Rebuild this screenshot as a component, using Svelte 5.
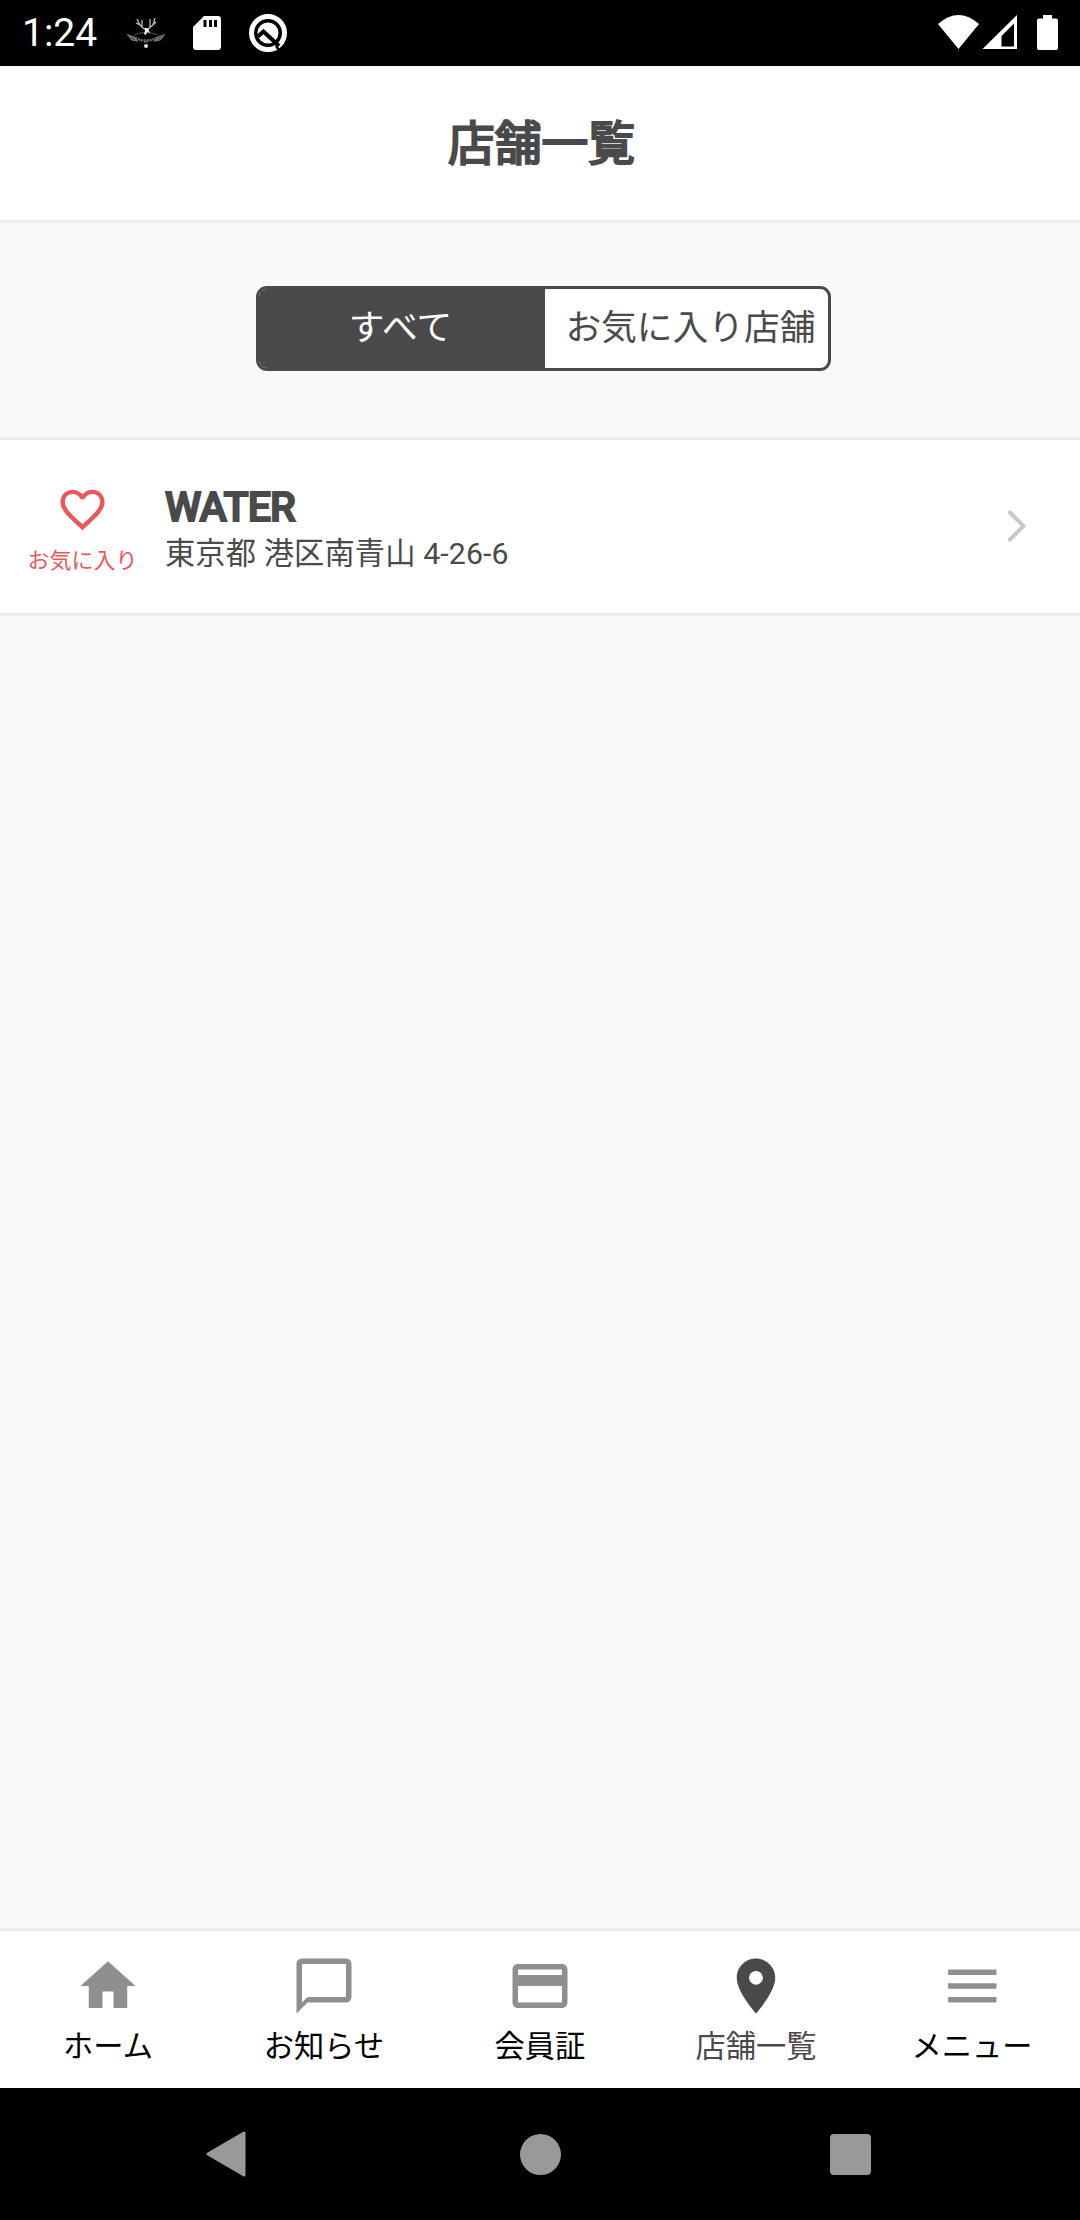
<script>
	let activeTab = $state('all');
	let activeNav = $state('shops');

	const tabs = [
		{ id: 'all', label: 'すべて' },
		{ id: 'favorite', label: 'お気に入り店舗' }
	];

	const shops = [{ name: 'WATER', address: '東京都 港区南青山 4-26-6' }];

	const navItems = [
		{ id: 'home', label: 'ホーム', path: 'M10 20v-6h4v6h5v-8h3L12 3 2 12h3v8z' },
		{
			id: 'news',
			label: 'お知らせ',
			path: 'M20 2H4c-1.100 0-2 .9-2 2v18l4-4h14c1.100 0 2-.9 2-2V4c0-1.100-.9-2-2-2zm0 14H6l-2 2V4h16v12z'
		},
		{
			id: 'card',
			label: '会員証',
			path: 'M20 4H4c-1.110 0-1.990.890-1.990 2L2 18c0 1.110.890 2 2 2h16c1.110 0 2-.890 2-2V6c0-1.110-.890-2-2-2zm0 14H4v-6h16v6zm0-10H4V6h16v2z'
		},
		{
			id: 'shops',
			label: '店舗一覧',
			path: 'M12 2C8.130 2 5 5.130 5 9c0 5.250 7 13 7 13s7-7.750 7-13c0-3.870-3.130-7-7-7zm0 9.500c-1.380 0-2.500-1.120-2.500-2.500s1.120-2.500 2.500-2.500 2.500 1.120 2.500 2.500-1.120 2.500-2.500 2.500z'
		},
		{ id: 'menu', label: 'メニュー', path: 'M3.300 18h17.600v-2H3.300v2zm0-5h17.600v-2H3.300v2zm0-7v2h17.600V6H3.300z' }
	];
</script>

<div class="screen">
	<div class="status-bar">
		<span class="time">1:24</span>
		<svg class="deer" viewBox="0 0 38 34" width="38" height="34">
			<g fill="none" stroke="#bbb" stroke-width="1.300">
				<path d="M17 13 13 9 10 3M13 9 9 7M15 11V4M21 13l5-4 2-7M26 9l3-3M23 11V3" />
				<path d="M7 19q12-5 24 0" stroke="#444" />
				<path d="M8 22q11 5 22 0" stroke="#777" stroke-width="2.500" stroke-dasharray="2 1" />
				<path d="m1 19 6 2 3 4-5-1zM37 19l-6 2-3 4 5-1z" fill="#555" stroke="#777" />
			</g>
			<path d="m17 12 4 0 2 5-3-1-1 3-2-1 1-3z" fill="#eee" />
			<circle cx="19" cy="30" r="2" fill="#ddd" />
			<path d="M17 26h4" stroke="#777" />
		</svg>
		<svg class="sd" viewBox="0 0 28 34" width="28" height="34">
			<path
				d="M11 0H25q3 0 3 3V31q0 3-3 3H3q-3 0-3-3V11zM10.500 4v7h3V4zm5.500 0v7h3V4zm5 0v7h3V4z"
				fill="#fff"
				fill-rule="evenodd"
			/>
		</svg>
		<svg class="q" viewBox="0 0 38 38" width="38" height="38">
			<circle cx="19" cy="19" r="16.500" fill="none" stroke="#fff" stroke-width="5" />
			<circle cx="19" cy="19" r="10.500" fill="#fff" />
			<path d="m9 22.500 5.500-5L30 32" fill="none" stroke="#000" stroke-width="4" />
			<path d="m27 32 3 4" stroke="#000" stroke-width="2.500" />
		</svg>
		<svg class="signals" viewBox="0 0 121 38" width="121" height="38">
			<path d="M0 10Q20.500-8 41 10L20.500 35z" fill="#fff" />
			<path d="M79 1v34H44.500zM76 9.500 63.500 22v10.500H76z" fill="#fff" fill-rule="evenodd" />
			<path
				d="M105 1h9v3.500h4q2 0 2 2V34q0 2-2 2h-17q-2 0-2-2V6.500q0-2 2-2h4z"
				fill="#fff"
			/>
		</svg>
	</div>

	<header>
		<h1>店舗一覧</h1>
	</header>

	<div class="filter">
		<div class="segment">
			{#each tabs as tab}
				<button class:active={activeTab === tab.id} onclick={() => (activeTab = tab.id)}>{tab.label}</button>
			{/each}
		</div>
	</div>

	<main>
		{#each shops as shop}
			<div class="shop">
				<div class="favorite">
					<svg viewBox="0 0 24 24" width="53" height="53">
						<path
							fill="#e9585a"
							d="M16.500 3c-1.740 0-3.410.810-4.500 2.090C10.910 3.810 9.240 3 7.500 3 4.420 3 2 5.420 2 8.500c0 3.780 3.400 6.860 8.550 11.540L12 21.350l1.450-1.320C18.600 15.360 22 12.280 22 8.500 22 5.420 19.580 3 16.500 3zm-4.400 15.550l-.1.100-.1-.1C7.140 14.240 4 11.390 4 8.500 4 6.500 5.500 5 7.500 5c1.540 0 3.040.990 3.570 2.360h1.870C13.460 5.990 14.960 5 16.500 5c2 0 3.500 1.500 3.500 3.500 0 2.890-3.140 5.740-7.900 10.050z"
						/>
					</svg>
					<span>お気に入り</span>
				</div>
				<div class="info">
					<h2>{shop.name}</h2>
					<p>{shop.address}</p>
				</div>
				<svg class="chevron" viewBox="0 0 18 32" width="18" height="32">
					<path d="M2 2.500 15.500 16 2 29.500" fill="none" stroke="#c8c8c8" stroke-width="4" stroke-linecap="round" />
				</svg>
			</div>
		{/each}
	</main>

	<nav>
		{#each navItems as item}
			<button class:active={activeNav === item.id} onclick={() => (activeNav = item.id)}>
				<svg viewBox="0 0 24 24" width="66" height="66"><path d={item.path} /></svg>
				<span>{item.label}</span>
			</button>
		{/each}
	</nav>

	<div class="system-nav">
		<svg viewBox="0 0 40 46" width="40" height="46">
			<path d="M38 2v42L2 23z" fill="#999" stroke="#999" stroke-width="3" stroke-linejoin="round" />
		</svg>
		<span class="circle"></span>
		<span class="square"></span>
	</div>
</div>

<style>
	:global(body) {
		margin: 0;
	}

	.screen {
		display: flex;
		flex-direction: column;
		width: 1080px;
		height: 2220px;
		background: #f9f9f9;
		color: #4a4a4a;
		font-family: Roboto, 'Noto Sans CJK JP', sans-serif;
		overflow: hidden;
	}

	button {
		border: 0;
		padding: 0;
		background: none;
		font: inherit;
		color: inherit;
	}

	h1,
	h2,
	p {
		margin: 0;
		white-space: nowrap;
	}

	.status-bar {
		display: flex;
		align-items: center;
		box-sizing: border-box;
		height: 66px;
		padding: 0 21px 0 22px;
		background: #000;
		color: #fff;
	}

	.time {
		width: 105px;
		font-size: 39px;
		line-height: 68px;
	}

	.sd {
		margin-left: 28px;
	}

	.q {
		margin-left: 28px;
	}

	.signals {
		margin-left: auto;
	}

	header {
		box-sizing: border-box;
		height: 157px;
		padding-left: 3px;
		background: #fff;
		border-bottom: 3px solid #ededed;
	}

	h1 {
		font-size: 46.750px;
		font-weight: 400;
		line-height: 156px;
		text-align: center;
		-webkit-text-stroke: 2.200px #4a4a4a;
	}

	.filter {
		display: flex;
		justify-content: center;
		box-sizing: border-box;
		height: 217px;
		padding: 63px 0 0 7px;
		border-bottom: 3px solid #ededed;
	}

	.segment {
		display: grid;
		grid-template-columns: 286px 283px;
		box-sizing: border-box;
		width: 575px;
		height: 85px;
		border: 3px solid #4a4a4a;
		border-radius: 11px;
		background: #fff;
		overflow: hidden;
	}

	.segment button {
		padding-right: 3px;
		font-size: 35.750px;
		line-height: 77px;
		white-space: nowrap;
	}

	.segment button:last-child {
		padding: 0 0 0 8px;
	}

	.segment .active {
		background: #4a4a4a;
		color: #fff;
	}

	main {
		flex: 1;
	}

	.shop {
		display: flex;
		align-items: flex-start;
		box-sizing: border-box;
		height: 176px;
		background: #fff;
		border-bottom: 3px solid #ededed;
	}

	.favorite {
		display: flex;
		flex-direction: column;
		align-items: center;
		width: 165px;
		padding-top: 43px;
		color: #e9585a;
	}

	.favorite span {
		margin-top: 9px;
		font-size: 22px;
		line-height: 32px;
	}

	.info {
		flex: 1;
		padding-top: 43px;
	}

	h2 {
		font-size: 41.250px;
		font-weight: 500;
		line-height: 48px;
		letter-spacing: -0.9px;
		-webkit-text-stroke: 1.800px #4a4a4a;
	}

	p {
		margin-top: 1px;
		font-size: 30.250px;
		line-height: 44px;
		letter-spacing: 0.12px;
	}

	.chevron {
		margin: 70px 54px 0 0;
	}

	nav {
		display: grid;
		grid-template-columns: repeat(5, 1fr);
		box-sizing: border-box;
		height: 160px;
		background: #fff;
		border-top: 3px solid #ededed;
	}

	nav button {
		display: flex;
		flex-direction: column;
		align-items: center;
		padding-top: 22px;
		color: #000;
	}

	nav svg {
		fill: #8f8f8f;
	}

	nav span {
		margin-top: 6px;
		font-size: 30.250px;
		line-height: 44px;
		white-space: nowrap;
	}

	nav .active {
		color: #4a4a4a;
	}

	nav .active svg {
		fill: #4a4a4a;
	}

	.system-nav {
		display: flex;
		align-items: center;
		justify-content: space-between;
		box-sizing: border-box;
		height: 132px;
		padding: 0 209px 0 206px;
		background: #000;
	}

	.circle,
	.square {
		width: 41px;
		height: 41px;
		background: #999;
	}

	.circle {
		margin-left: 4px;
		border-radius: 50%;
	}

	.square {
		border-radius: 4px;
	}
</style>
